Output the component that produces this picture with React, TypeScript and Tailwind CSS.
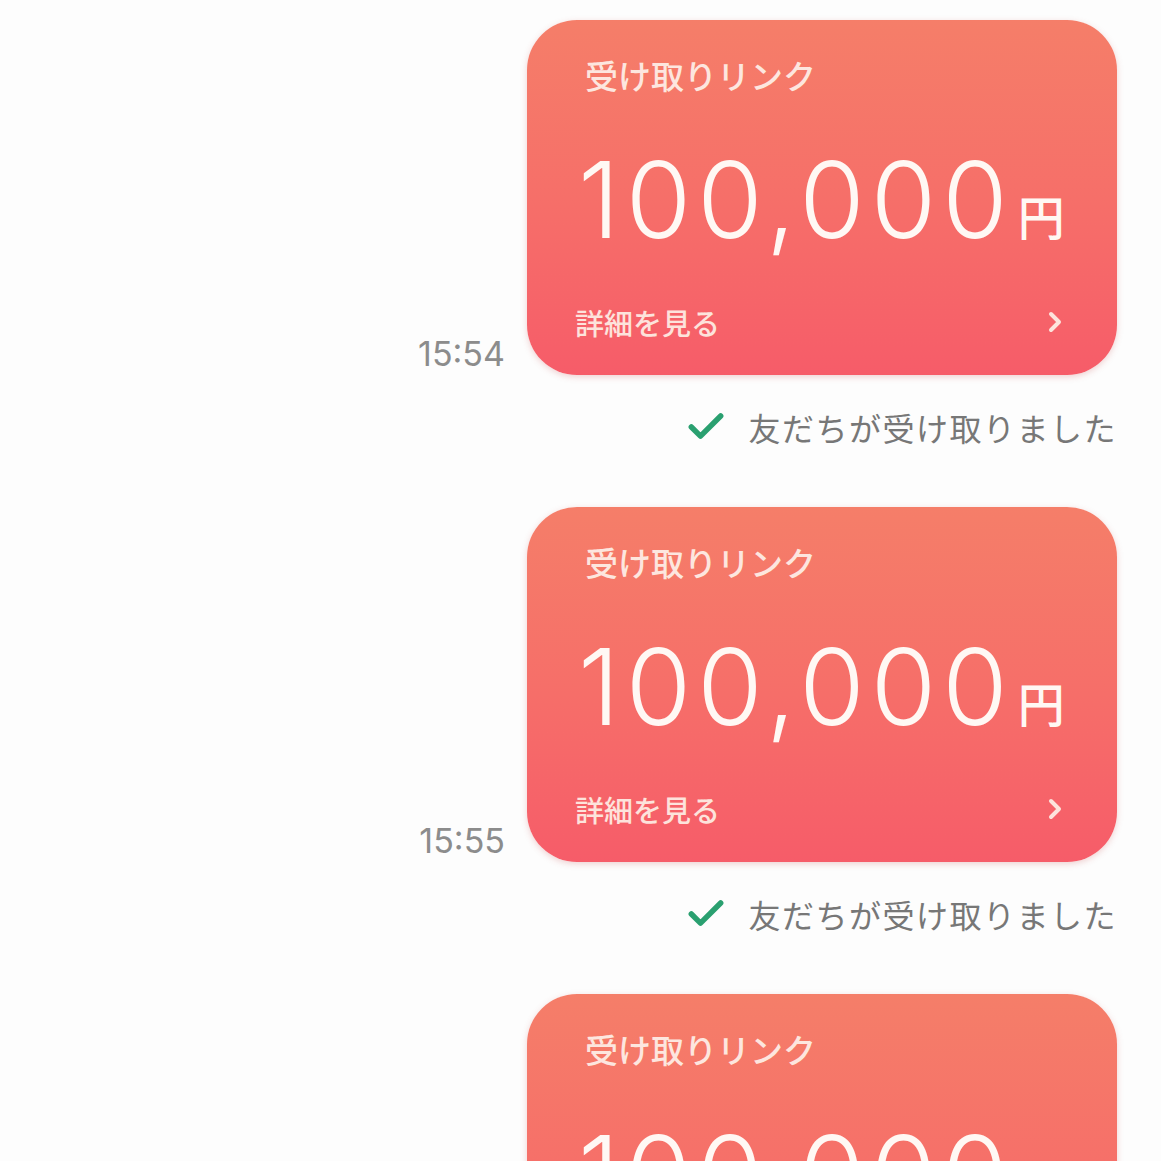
import { Check, ChevronRight } from "lucide-react";

const messages = [
  { time: "15:54", amount: "100,000", received: true },
  { time: "15:55", amount: "100,000", received: true },
  { time: "15:56", amount: "100,000", received: false },
];

const jp = "font-['Noto_Sans_CJK_JP','Noto_Sans',sans-serif]";

function LinkCard({ amount }: { amount: string }) {
  return (
    <div className="flex h-[355px] w-[590px] shrink-0 flex-col rounded-[50px] bg-gradient-to-b from-[#f57e69] via-[#f66f69] to-[#f65c69] shadow-[0_2px_6px_rgba(200,80,80,0.25)]">
      {/* Title */}
      <div className={`pl-[58px] pt-[39px] text-[33px] font-medium leading-none text-[#fde6df] ${jp}`}>
        受け取りリンク
      </div>

      {/* Amount */}
      <div className="mt-[55px] flex items-end pl-[51px]">
        <span className="font-['Inter',sans-serif] text-[106px] font-light leading-none tracking-[6px] text-[#fff8f4]">
          {amount}
        </span>
        <span className={`mb-[15px] ml-[4px] text-[47px] font-medium leading-none text-[#fff8f4] ${jp}`}>
          円
        </span>
      </div>

      {/* Footer */}
      <div className="mt-auto mb-[37px] flex items-center justify-between pl-[48px] pr-[46px]">
        <span className={`text-[29px] font-medium leading-none text-[#fde3dc] ${jp}`}>
          詳細を見る
        </span>
        <ChevronRight size={32} strokeWidth={3} color="#fde3dc" />
      </div>
    </div>
  );
}

export default function App() {
  return (
    <div className="h-[1161px] w-[1161px] overflow-hidden bg-[#fdfdfd]">
      <div className="flex flex-col items-end pr-[44px] pt-[20px]">
        {messages.map((m, i) => (
          <div key={i} className="flex flex-col items-end">
            <div className="flex items-end gap-[22px]">
              <span className="mb-[4px] font-['Inter',sans-serif] text-[34px] leading-none text-[#8c8c8c]">
                {m.time}
              </span>
              <LinkCard amount={m.amount} />
            </div>
            {m.received && (
              <div className="mb-[58px] mt-[30px] flex items-center gap-[20px]">
                <Check size={44} strokeWidth={3} color="#2aa070" />
                <span className={`text-[32px] leading-none tracking-[1.5px] text-[#777777] ${jp}`}>
                  友だちが受け取りました
                </span>
              </div>
            )}
          </div>
        ))}
      </div>
    </div>
  );
}
